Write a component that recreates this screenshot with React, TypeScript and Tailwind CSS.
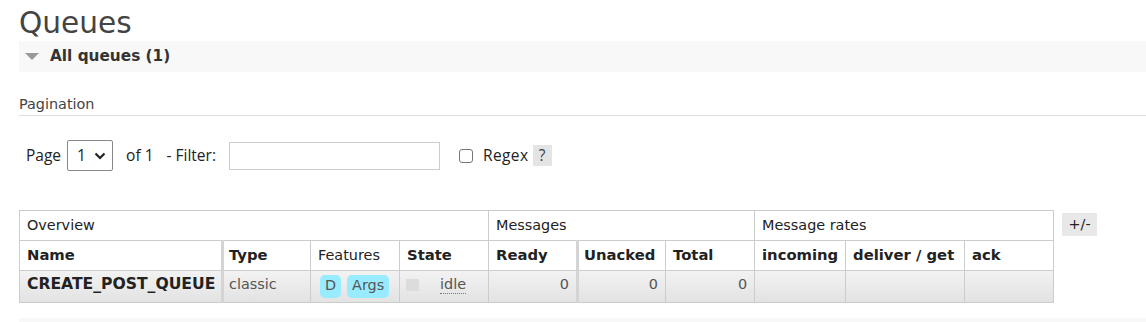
import React from 'react';

const verdana = "font-['DejaVu_Sans',Verdana,sans-serif]";
const ui = "font-['Open_Sans','Noto_Sans',sans-serif]";

function Badge({ label }: { label: string }) {
  return (
    <span className="inline-flex h-[23px] items-center rounded-[5px] bg-[#99ebff] px-[5px] text-[#555]">
      {label}
    </span>
  );
}

export default function App() {
  const queues = [
    { name: 'CREATE_POST_QUEUE', type: 'classic', features: ['D', 'Args'], state: 'idle', ready: 0, unacked: 0, total: 0 },
  ];

  return (
    <div className={`${verdana} min-h-[322px] bg-white pl-[19px] text-[14.4px] text-[#222]`}>
      <h1 className="pt-[6px] text-[29.6px] leading-[35px] text-[#444]">Queues</h1>

      <div className="flex h-[31px] items-center bg-[#f8f8f8] pl-[6px] text-[15.3px] font-bold text-[#333]">
        <svg width="14" height="8" viewBox="0 0 14 8" className="mr-[11px]">
          <polygon points="0,0 14,0 7,7" fill="#999" />
        </svg>
        All queues (1)
      </div>

      <h3 className="mt-[23px] border-b border-[#ddd] pb-[2px] leading-[18px] text-[#444]">Pagination</h3>

      <div className={`${ui} mt-[24px] flex items-center pl-[7px] text-[15.5px] text-[#222]`}>
        <span>Page</span>
        <div className="ml-[6px] flex h-[31px] w-[46px] items-center justify-between rounded-[2px] border border-[#888] pl-[9px] pr-[6px]">
          <span>1</span>
          <svg width="12" height="8" viewBox="0 0 12 8">
            <path d="M1.5 1.5 L6 6 L10.5 1.5" fill="none" stroke="#222" strokeWidth="2.2" />
          </svg>
        </div>
        <span className="ml-[13px]">of 1</span>
        <span className="ml-[13px]">- Filter:</span>
        <input className="ml-[13px] h-[28px] w-[211px] border border-[#ccc] outline-none" />
        <span className="ml-[19px] h-[14px] w-[14px] rounded-[3px] border border-[#767676] bg-white" />
        <span className="ml-[10px] tracking-[0.4px]">Regex</span>
        <span className="ml-[4px] flex h-[21px] w-[19px] items-center justify-center bg-[#e4e4e4] text-[#444]">?</span>
      </div>

      <div className="mt-[39px] flex items-start">
        <table className="w-[1034px] table-fixed border-collapse">
          <colgroup>
            <col className="w-[203px]" />
            <col className="w-[88px]" />
            <col className="w-[89px]" />
            <col className="w-[89px]" />
            <col className="w-[89px]" />
            <col className="w-[88px]" />
            <col className="w-[89px]" />
            <col className="w-[91px]" />
            <col className="w-[119px]" />
            <col className="w-[89px]" />
          </colgroup>
          <thead>
            <tr className="h-[30px]">
              <th colSpan={4} className="border border-[#ccc] px-[7px] text-left font-normal">Overview</th>
              <th colSpan={3} className="border border-[#ccc] px-[7px] text-left font-normal">Messages</th>
              <th colSpan={3} className="border border-[#ccc] px-[7px] text-left font-normal">Message rates</th>
            </tr>
            <tr className="h-[30px] text-[14.8px]">
              <th className="border border-[#ccc] px-[7px] text-left font-bold">Name</th>
              <th className="border border-[#ccc] border-l-[3px] border-l-[#d4d4d4] px-[5px] text-left font-bold">Type</th>
              <th className="border border-[#ccc] px-[7px] text-left text-[14.4px] font-normal">Features</th>
              <th className="border border-[#ccc] px-[7px] text-left font-bold">State</th>
              <th className="border border-[#ccc] px-[7px] text-left font-bold">Ready</th>
              <th className="border border-[#ccc] border-l-[3px] border-l-[#d4d4d4] px-[5px] text-left font-bold">Unacked</th>
              <th className="border border-[#ccc] px-[7px] text-left font-bold">Total</th>
              <th className="border border-[#ccc] px-[7px] text-left font-bold">incoming</th>
              <th className="border border-[#ccc] px-[7px] text-left font-bold">deliver / get</th>
              <th className="border border-[#ccc] px-[7px] text-left font-bold">ack</th>
            </tr>
          </thead>
          <tbody>
            {queues.map(q => (
              <tr key={q.name} className="h-[32px] bg-gradient-to-b from-[#f2f2f2] to-[#e2e2e2]">
                <td className="border border-[#ccc] px-[7px] pb-[4px] text-[15.6px] font-bold">{q.name}</td>
                <td className="border border-[#ccc] border-l-[3px] border-l-[#d4d4d4] px-[5px] pb-[4px] text-[#555]">{q.type}</td>
                <td className="border border-[#ccc] px-[9px] pb-[1px]">
                  <div className="flex items-center gap-[6px]">
                    {q.features.map(f => (
                      <Badge key={f} label={f} />
                    ))}
                  </div>
                </td>
                <td className="border border-[#ccc] px-[6px] pb-[4px]">
                  <div className="flex items-center">
                    <span className="h-[12px] w-[13px] bg-[#dcdcdc]" />
                    <span className="ml-[21px] border-b border-dotted border-[#777] leading-[18px] text-[#555]">{q.state}</span>
                  </div>
                </td>
                <td className="border border-[#ccc] px-[7px] pb-[4px] text-right text-[#555]">{q.ready}</td>
                <td className="border border-[#ccc] border-l-[3px] border-l-[#d4d4d4] px-[7px] pb-[4px] text-right text-[#555]">{q.unacked}</td>
                <td className="border border-[#ccc] px-[7px] pb-[4px] text-right text-[#555]">{q.total}</td>
                <td className="border border-[#ccc]" />
                <td className="border border-[#ccc]" />
                <td className="border border-[#ccc]" />
              </tr>
            ))}
          </tbody>
        </table>
        <span className="ml-[8px] mt-[3px] flex h-[23px] w-[35px] items-center justify-center bg-[#e8e8e8] text-[#222]">+/-</span>
      </div>

      <div className="mt-[15px] h-[31px] bg-[#f8f8f8]" />
    </div>
  );
}
